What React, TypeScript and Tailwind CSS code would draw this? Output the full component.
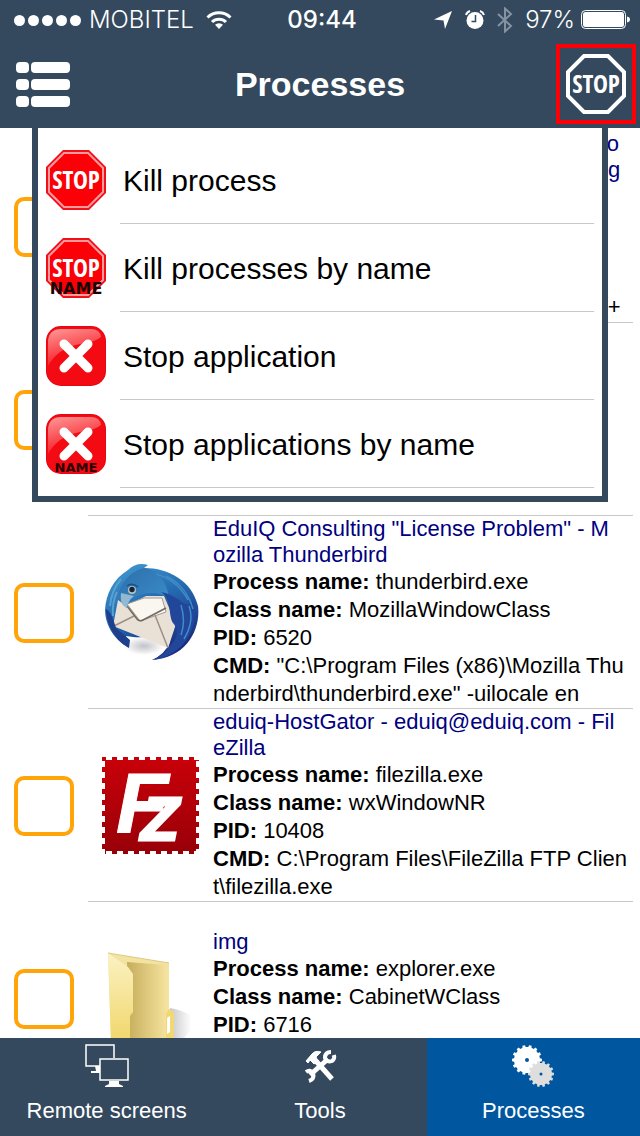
import { useState, type ReactNode } from "react";

type Process = {
  title: string[];
  name: string;
  className: string;
  pid: number;
  cmd: string[];
  icon: ReactNode;
};

// Outline of a cog wheel with square teeth
function gearPath(cx: number, cy: number, inner: number, outer: number, teeth: number) {
  const step = (Math.PI * 2) / teeth;
  const points: string[] = [];
  for (let i = 0; i < teeth; i++) {
    const a = i * step;
    [
      [inner, -0.28],
      [outer, -0.2],
      [outer, 0.2],
      [inner, 0.28],
    ].forEach(([r, t]) => {
      points.push(`${cx + r * Math.cos(a + t * step)} ${cy + r * Math.sin(a + t * step)}`);
    });
  }
  return `M${points.join("L")}Z`;
}

function WifiIcon() {
  return (
    <svg width="26" height="20" viewBox="0 0 26 20" fill="none" stroke="white" strokeWidth="3">
      <path d="M1.5 7.5a16.5 16.5 0 0 1 23 0" />
      <path d="M6 12a10.3 10.3 0 0 1 14 0" />
      <path d="M13 19l-4-4.200a6 6 0 0 1 8 0z" fill="white" stroke="none" />
    </svg>
  );
}

function LocationIcon() {
  return (
    <svg width="20" height="20" viewBox="0 0 20 20" fill="white">
      <path d="M19 1L12 19L10.500 10.500L1 9.500Z" />
    </svg>
  );
}

function AlarmIcon() {
  return (
    <svg width="20" height="20" viewBox="0 0 20 20" fill="none">
      <circle cx="10" cy="10.500" r="8.500" fill="white" />
      <path d="M1 5a6 6 0 0 1 4-4M19 5a6 6 0 0 0-4-4" stroke="white" strokeWidth="2" />
      <path d="M10.500 5v6.500H6.500" stroke="#34495e" strokeWidth="1.500" />
    </svg>
  );
}

function BluetoothIcon() {
  return (
    <svg width="16" height="26" viewBox="0 0 16 26" fill="none" stroke="#8592a0" strokeWidth="2">
      <path d="M1 7l13 12-6 5.500V1.500L14 7 1 19" />
    </svg>
  );
}

function BatteryIcon() {
  return (
    <svg width="49" height="20" viewBox="0 0 49 20" fill="none">
      <rect x="0.500" y="0.500" width="44" height="18" rx="4" stroke="white" />
      <rect x="2" y="2" width="41" height="15" rx="2.500" fill="white" />
      <path d="M46 6.500c2 .3 3 1.500 3 3s-1 2.700-3 3z" fill="white" />
    </svg>
  );
}

function MenuIcon() {
  return (
    <svg width="54" height="45" viewBox="0 0 54 45" fill="white">
      {[0, 17, 34].map((y) => (
        <g key={y}>
          <rect x="0" y={y} width="13" height="11" rx="4" />
          <rect x="15" y={y} width="39" height="11" rx="4" />
        </g>
      ))}
    </svg>
  );
}

const stopText = "font-['Open_Sans_Condensed','Liberation_Sans_Narrow',sans-serif] font-bold";

function StopOutlineIcon() {
  return (
    <svg width="60" height="60" viewBox="0 0 60 60">
      <path d="M18 2h24l16 16v24L42 58H18L2 42V18z" fill="none" stroke="white" strokeWidth="4" />
      <text x="30" y="39" textAnchor="middle" fontSize="25" fill="white" className={stopText}>
        STOP
      </text>
    </svg>
  );
}

function StopIcon({ label }: { label?: string }) {
  return (
    <svg width="60" height="60" viewBox="0 0 60 60">
      <path d="M17 0h26l17 17v26L43 60H17L0 43V17z" fill="#f0101a" />
      <path d="M18 3h24l15 15v24L42 57H18L3 42V18z" fill="#fb0007" stroke="#ff9a9a" strokeWidth="2" />
      <text x="30" y="39" textAnchor="middle" fontSize="25" fill="white" className={stopText}>
        STOP
      </text>
      {label && (
        <text x="30" y="56" textAnchor="middle" fontSize="16" fill="#1a0505" className="font-['DejaVu_Sans',sans-serif] font-bold">
          {label}
        </text>
      )}
    </svg>
  );
}

function CloseIcon({ label }: { label?: string }) {
  return (
    <svg width="60" height="60" viewBox="0 0 60 60">
      <defs>
        <linearGradient id="closeShine" x1="0" y1="0" x2="0.400" y2="1">
          <stop offset="0" stopColor="#ff9a9a" />
          <stop offset="1" stopColor="#f5121a" />
        </linearGradient>
      </defs>
      <rect width="60" height="60" rx="15" fill="#e30613" />
      <rect x="1" y="1" width="58" height="58" rx="14" fill="#f40a12" />
      <path d="M2 40V15Q3 3 15 3H45Q54 3 55 11Q50 16 34 18Q12 22 2 40Z" fill="url(#closeShine)" />
      <path d="M18 18L42 42M42 18L18 42" stroke="white" strokeWidth="9" strokeLinecap="round" />
      {label && (
        <text x="30" y="58" textAnchor="middle" fontSize="13" fill="#2a0000" className="font-['DejaVu_Sans',sans-serif] font-bold">
          {label}
        </text>
      )}
    </svg>
  );
}

function ThunderbirdIcon() {
  return (
    <svg width="97" height="97" viewBox="0 0 97 97">
      <defs>
        <linearGradient id="birdBody" x1="0.200" y1="0" x2="0.700" y2="1">
          <stop offset="0" stopColor="#3f97cf" />
          <stop offset="0.450" stopColor="#2468ae" />
          <stop offset="1" stopColor="#1b2478" />
        </linearGradient>
        <linearGradient id="birdHead" x1="0" y1="0" x2="1" y2="1">
          <stop offset="0" stopColor="#2d6eaa" />
          <stop offset="1" stopColor="#3b8fca" />
        </linearGradient>
        <radialGradient id="birdShadow">
          <stop offset="0" stopColor="#c2c2c8" />
          <stop offset="1" stopColor="#ffffff" />
        </radialGradient>
      </defs>
      <path
        d="M26 6C32 0 39 -1 46 1L42 4C67 4 90 17 96 42C99 66 84 94 50 96C58 92 63 86 65 82L30 76C24 74 26 80 28 84C14 78 3 62 3 46C4 30 11 15 26 6Z"
        fill="url(#birdBody)"
      />
      <path d="M24 72L68 78Q62 92 50 95Q34 92 26 82Z" fill="#ffffff" />
      <ellipse cx="42" cy="82" rx="20" ry="9" fill="url(#birdShadow)" />
      <path d="M16 36L11 62L66 84L74 60L62 32L44 32L24 42Z" fill="#e9e1d5" />
      <path d="M25 40L38 57L64 48L60 34L42 34Z" fill="#faf7f1" stroke="#a49a91" strokeWidth="1" />
      <path d="M12 62L32 52M53 51L66 84" stroke="#9b9087" strokeWidth="1.500" />
      <path d="M25 42L35 55Q37 58 41 56L64 44" fill="none" stroke="#6f6964" strokeWidth="1.500" />
      <path d="M15 36C17 22 26 8 42 4C53 5 65 16 67 34C56 27 43 28 33 33C28 36 26 39 25 44C20 40 19 36 20 31Z" fill="url(#birdHead)" />
      <path d="M19 29C18 38 20 42 25 44C26 38 28 35 32 32Z" fill="#93b8d2" />
      <path d="M59 28C70 35 66 51 71 59C74 62 80 71 66 84C62 90 56 94 50 96C84 92 98 60 91 37C84 48 78 31 59 28Z" fill="#21469a" />
      <path d="M4 45C9 48 11 54 14 64L28 76L27 84C13 76 4 60 4 45Z" fill="#1d3f8c" />
      <path d="M54 10C68 14 79 23 86 36M64 12C77 18 87 30 91 45M79 41C82 51 83 60 79 71M87 42C91 53 88 65 82 75" fill="none" stroke="#3f8cc8" strokeWidth="1.500" />
      <path d="M8 42C9 30 14 21 19 15M11 52C10 41 12 34 15 28" fill="none" stroke="#58a0d1" strokeWidth="2" />
      <circle cx="30" cy="26" r="4" fill="#b9c2ba" />
      <circle cx="30" cy="25.500" r="2.700" fill="#15243d" />
      <path d="M25 22Q30 18 36 23" fill="none" stroke="#1d4f86" strokeWidth="1.500" />
    </svg>
  );
}

function FileZillaIcon() {
  return (
    <svg width="97" height="97" viewBox="0 0 97 97">
      <defs>
        <linearGradient id="fzRed" x1="0" y1="0" x2="0" y2="1">
          <stop offset="0" stopColor="#c90009" />
          <stop offset="1" stopColor="#980008" />
        </linearGradient>
      </defs>
      <rect width="97" height="97" fill="url(#fzRed)" />
      <path d="M4 1.500H97M4 95.500H97M1.500 4V97M95.500 4V97" stroke="white" strokeWidth="3" strokeDasharray="6 5" />
      <g fill="white" stroke="white" className="font-['Liberation_Sans',sans-serif] font-bold italic">
        <text x="14" y="76" fontSize="86" strokeWidth="1">
          F
        </text>
        <text x="39" y="83" fontSize="62" strokeWidth="3">
          Z
        </text>
      </g>
    </svg>
  );
}

function FolderIcon() {
  return (
    <svg width="97" height="97" viewBox="0 0 97 97">
      <defs>
        <linearGradient id="folderBack" x1="0" y1="0" x2="1" y2="0">
          <stop offset="0" stopColor="#c6ad5b" />
          <stop offset="1" stopColor="#f4e19c" />
        </linearGradient>
        <linearGradient id="folderFront" x1="0" y1="0" x2="0" y2="1">
          <stop offset="0" stopColor="#fbf2c4" />
          <stop offset="1" stopColor="#f0d566" />
        </linearGradient>
        <linearGradient id="folderShadow" x1="0" y1="0" x2="1" y2="0">
          <stop offset="0" stopColor="#b4b4b4" />
          <stop offset="0.800" stopColor="#ffffff" />
        </linearGradient>
      </defs>
      <path d="M68 58Q84 61 97 70L78 93L60 94Z" fill="url(#folderShadow)" />
      <path d="M6 3L67 13V96H9Z" fill="#f3e3a0" />
      <path d="M25 12L64 15V92L28 96Z" fill="url(#folderBack)" />
      <path d="M67 59L72 62V88L64 91V63Z" fill="#f1d875" />
      <path d="M65 68l3-2v16l-3 2z" fill="#ffffff" />
      <path d="M6 3L26 17L31 24V62L28 66V96L9 88Z" fill="url(#folderFront)" />
      <path d="M6 3L67 13" stroke="#ddc983" strokeWidth="1" />
    </svg>
  );
}

function ScreensIcon() {
  return (
    <svg width="44" height="44" viewBox="0 0 44 44" fill="none" stroke="white" strokeWidth="1.500">
      <path d="M15 22H1V1H29V14" />
      <path d="M10 22h5v5h-4z" fill="white" stroke="none" />
      <path d="M6 28h9" strokeWidth="2" />
      <rect x="15" y="15" width="28" height="21" />
      <path d="M24 37h10v3l4 2v1H20v-1l4-2z" fill="white" stroke="none" />
    </svg>
  );
}

function ToolsIcon() {
  return (
    <svg width="44" height="44" viewBox="0 0 44 44" fill="none" stroke="white">
      <path d="M18 17L34 35" strokeWidth="5" />
      <path d="M8 17L14 10Q17 6 23 8L18 13L20 17L16 20L12 16L10 19Z" fill="white" strokeWidth="1" />
      <path d="M12 31L30 15" strokeWidth="5" />
      <path d="M33 8Q27 8 27 14Q29 19 34 17Q37 15 36 11" strokeWidth="4" />
      <path d="M8 28Q12 25 15 29Q17 35 11 37" strokeWidth="4" />
    </svg>
  );
}

function GearsIcon() {
  return (
    <svg width="44" height="44" viewBox="0 0 44 44">
      <path d={gearPath(16, 16, 13, 15, 14)} fill="white" />
      <circle cx="16" cy="16" r="2" fill="#01579f" />
      <path d={gearPath(30, 30, 11, 13, 14)} fill="#dedede" />
      <circle cx="30" cy="30" r="1.500" fill="#01579f" />
    </svg>
  );
}

const processes: Process[] = [
  {
    title: ["C:\\Program Files\\EduIQ\\changes.log - No", "tepad++ [Administrator] - NetSupport msg", "files"],
    name: "notepad++.exe",
    className: "Notepad++",
    pid: 7312,
    cmd: ['"C:\\Program Files (x86)\\Notepad++'],
    icon: <FolderIcon />,
  },
  {
    title: ["Downloads"],
    name: "explorer.exe",
    className: "CabinetWClass",
    pid: 6716,
    cmd: ["C:\\Windows\\explorer.exe"],
    icon: <FolderIcon />,
  },
  {
    title: ['EduIQ Consulting "License Problem" - M', "ozilla Thunderbird"],
    name: "thunderbird.exe",
    className: "MozillaWindowClass",
    pid: 6520,
    cmd: ['"C:\\Program Files (x86)\\Mozilla Thu', 'nderbird\\thunderbird.exe" -uilocale en'],
    icon: <ThunderbirdIcon />,
  },
  {
    title: ["eduiq-HostGator - eduiq@eduiq.com - Fil", "eZilla"],
    name: "filezilla.exe",
    className: "wxWindowNR",
    pid: 10408,
    cmd: ["C:\\Program Files\\FileZilla FTP Clien", "t\\filezilla.exe"],
    icon: <FileZillaIcon />,
  },
  {
    title: ["img"],
    name: "explorer.exe",
    className: "CabinetWClass",
    pid: 6716,
    cmd: ["C:\\Windows\\explorer.exe"],
    icon: <FolderIcon />,
  },
];

const actions = [
  { label: "Kill process", icon: <StopIcon /> },
  { label: "Kill processes by name", icon: <StopIcon label="NAME" /> },
  { label: "Stop application", icon: <CloseIcon /> },
  { label: "Stop applications by name", icon: <CloseIcon label="NAME" /> },
];

const tabs = [
  { label: "Remote screens", icon: <ScreensIcon /> },
  { label: "Tools", icon: <ToolsIcon /> },
  { label: "Processes", icon: <GearsIcon /> },
];

function StatusBar() {
  return (
    <div className="flex h-10 items-center pl-3.5 pr-2.5 font-['Inter',sans-serif] text-2xl text-white">
      <div className="flex flex-1 items-center">
        <div className="flex gap-[3px]">
          {[0, 1, 2, 3, 4].map((dot) => (
            <span key={dot} className="size-[11px] rounded-full bg-white" />
          ))}
        </div>
        <span className="ml-2 mr-3 font-light">MOBITEL</span>
        <WifiIcon />
      </div>
      <span className="font-medium">09:44</span>
      <div className="flex flex-1 items-center justify-end">
        <LocationIcon />
        <span className="ml-3 mr-3">
          <AlarmIcon />
        </span>
        <BluetoothIcon />
        <span className="ml-3 mr-1.5 font-light">97%</span>
        <BatteryIcon />
      </div>
    </div>
  );
}

function Field({ label, children }: { label: string; children: ReactNode }) {
  return (
    <p className="leading-7">
      <b>{label}:</b> {children}
    </p>
  );
}

function ProcessRow({ process }: { process: Process }) {
  return (
    <li className="flex h-[193px] shrink-0 items-center pl-3.5 pr-[7px]">
      <input
        type="checkbox"
        aria-label={`Select ${process.title.join("")}`}
        className="size-[60px] shrink-0 appearance-none rounded-[10px] border-4 border-[#ffa50a] bg-white checked:bg-[#ffa50a]"
      />
      <div className="ml-3.5 flex h-full min-w-0 flex-1 items-center gap-3.5 border-b border-[#c8c8c8] pl-3.5">
        <div className="shrink-0">{process.icon}</div>
        <div className="min-w-0 flex-1 whitespace-nowrap text-[22px]">
          {process.title.map((line) => (
            <p key={line} className="leading-[26px] text-[#000080]">
              {line}
            </p>
          ))}
          <Field label="Process name">{process.name}</Field>
          <Field label="Class name">{process.className}</Field>
          <Field label="PID">{process.pid}</Field>
          <Field label="CMD">{process.cmd[0]}</Field>
          {process.cmd.slice(1).map((line) => (
            <p key={line} className="leading-7">
              {line}
            </p>
          ))}
        </div>
      </div>
    </li>
  );
}

export default function App() {
  const [menuOpen, setMenuOpen] = useState(true);
  const [activeTab, setActiveTab] = useState("Processes");

  return (
    <div className="flex h-screen flex-col bg-white font-['Liberation_Sans',Arial,sans-serif] text-black">
      <header className="shrink-0 bg-[#34495e]">
        <StatusBar />
        <div className="grid h-22 grid-cols-[1fr_auto_1fr] items-center">
          <div className="flex pl-4">
            <button aria-label="Menu">
              <MenuIcon />
            </button>
          </div>
          <h1 className="text-[34px] font-bold text-white">Processes</h1>
          <div className="flex justify-end pr-1">
            <button
              aria-label="Stop actions"
              onClick={() => setMenuOpen(!menuOpen)}
              className="flex size-20 items-center justify-center border-4 border-[#fb0007]"
            >
              <StopOutlineIcon />
            </button>
          </div>
        </div>
      </header>

      <main className="relative min-h-0 flex-1 overflow-hidden">
        <ul className="flex h-full flex-col overflow-y-auto pt-0.5 [scrollbar-width:none]">
          {processes.map((process, index) => (
            <ProcessRow key={index} process={process} />
          ))}
        </ul>

        {/* Stop menu, opened from the header button */}
        {menuOpen && (
          <div className="absolute inset-x-8 top-0 border-x-6 border-b-6 border-[#34495e] bg-white p-2">
            {actions.map((action) => (
              <button
                key={action.label}
                onClick={() => setMenuOpen(false)}
                className="flex h-22 w-full items-center gap-3.5 text-left text-[30px]"
              >
                {action.icon}
                <span className="flex h-full flex-1 items-center border-b border-[#c8c8c8] pl-[3px] pt-0.5">
                  {action.label}
                </span>
              </button>
            ))}
          </div>
        )}
      </main>

      <nav className="grid shrink-0 grid-cols-3 bg-[#34495e] text-[22px] text-white">
        {tabs.map((tab) => (
          <button
            key={tab.label}
            onClick={() => setActiveTab(tab.label)}
            className={`flex h-[98px] flex-col items-center gap-[11px] pt-1.5 leading-6 ${
              activeTab === tab.label ? "bg-[#01579f]" : ""
            }`}
          >
            {tab.icon}
            <span>{tab.label}</span>
          </button>
        ))}
      </nav>
    </div>
  );
}
